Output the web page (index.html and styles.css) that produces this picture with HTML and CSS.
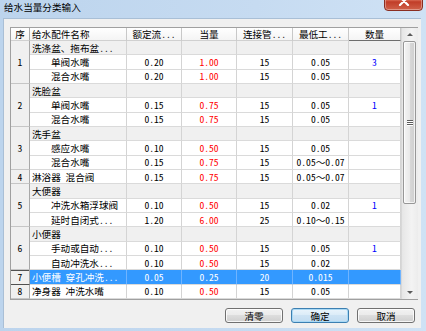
FILE: index.html
```html
<!DOCTYPE html>
<html lang="zh-CN">
<head>
<meta charset="utf-8">
<title>给水当量分类输入</title>
<link rel="stylesheet" href="styles.css">
</head>
<body>
<div class="window">
  <div class="titlebar">
    <span class="title">给水当量分类输入</span>
    <div class="close"><svg width="12" height="10" viewBox="0 0 12 10"><path d="M2 1 L10 9 M10 1 L2 9" stroke="#fff" stroke-width="2.2" stroke-linecap="round"/></svg></div>
  </div>
  <div class="client">
    <div class="grid">
      <div class="table-wrap">
        <table class="data">
          <thead>
            <tr>
              <th class="w-no">序</th>
              <th class="w-name left">给水配件名称</th>
              <th class="w-a">额定流...</th>
              <th class="w-a">当量</th>
              <th class="w-b">连接管...</th>
              <th class="w-b">最低工...</th>
              <th class="w-q sorted">数量</th>
            </tr>
          </thead>
          <tbody>
            <tr class="group"><td class="no" rowspan="3">1</td><td class="name">洗涤盆、拖布盆...</td><td></td><td></td><td></td><td></td><td></td></tr>
            <tr><td class="name sub">单阀水嘴</td><td>0.20</td><td class="red">1.00</td><td>15</td><td>0.05</td><td class="qty">3</td></tr>
            <tr><td class="name sub">混合水嘴</td><td>0.20</td><td class="red">1.00</td><td>15</td><td>0.05</td><td></td></tr>

            <tr class="group"><td class="no" rowspan="3">2</td><td class="name">洗脸盆</td><td></td><td></td><td></td><td></td><td></td></tr>
            <tr><td class="name sub">单阀水嘴</td><td>0.15</td><td class="red">0.75</td><td>15</td><td>0.05</td><td class="qty">1</td></tr>
            <tr><td class="name sub">混合水嘴</td><td>0.15</td><td class="red">0.75</td><td>15</td><td>0.05</td><td></td></tr>

            <tr class="group"><td class="no" rowspan="3">3</td><td class="name">洗手盆</td><td></td><td></td><td></td><td></td><td></td></tr>
            <tr><td class="name sub">感应水嘴</td><td>0.10</td><td class="red">0.50</td><td>15</td><td>0.05</td><td></td></tr>
            <tr><td class="name sub">混合水嘴</td><td>0.15</td><td class="red">0.75</td><td>15</td><td>0.05～0.07</td><td></td></tr>

            <tr><td class="no">4</td><td class="name">淋浴器 混合阀</td><td>0.15</td><td class="red">0.75</td><td>15</td><td>0.05～0.07</td><td></td></tr>

            <tr class="group"><td class="no" rowspan="3">5</td><td class="name">大便器</td><td></td><td></td><td></td><td></td><td></td></tr>
            <tr><td class="name sub">冲洗水箱浮球阀</td><td>0.10</td><td class="red">0.50</td><td>15</td><td>0.02</td><td class="qty">1</td></tr>
            <tr><td class="name sub">延时自闭式...</td><td>1.20</td><td class="red">6.00</td><td>25</td><td>0.10～0.15</td><td></td></tr>

            <tr class="group"><td class="no" rowspan="3">6</td><td class="name">小便器</td><td></td><td></td><td></td><td></td><td></td></tr>
            <tr><td class="name sub">手动或自动...</td><td>0.10</td><td class="red">0.50</td><td>15</td><td>0.05</td><td class="qty">1</td></tr>
            <tr><td class="name sub">自动冲洗水...</td><td>0.10</td><td class="red">0.50</td><td>15</td><td>0.02</td><td></td></tr>

            <tr class="selected"><td class="no current">7</td><td class="name">小便槽 穿孔冲洗...</td><td>0.05</td><td class="red">0.25</td><td>20</td><td>0.015</td><td></td></tr>
            <tr><td class="no">8</td><td class="name">净身器 冲洗水嘴</td><td>0.10</td><td class="red">0.50</td><td>15</td><td>0.05</td><td></td></tr>
          </tbody>
        </table>
      </div>
      <div class="scrollbar">
        <div class="sb-btn"><span class="arrow-up"></span></div>
        <div class="sb-track">
          <div class="sb-thumb"><span class="grip"></span><span class="grip"></span><span class="grip"></span></div>
        </div>
        <div class="sb-btn"><span class="arrow-down"></span></div>
      </div>
    </div>
    <div class="buttons">
      <button class="btn">清零</button>
      <button class="btn default">确定</button>
      <button class="btn">取消</button>
    </div>
  </div>
</div>
</body>
</html>
```

FILE: styles.css
```css
* { box-sizing: border-box; }
html, body { margin: 0; padding: 0; }
body {
  width: 426px;
  height: 331px;
  overflow: hidden;
  font-family: "Noto Sans Mono CJK SC", "Noto Sans CJK SC", sans-serif;
  font-size: 9.6px;
  color: #000;
}
.window {
  width: 426px;
  height: 331px;
  display: flex;
  flex-direction: column;
  background: linear-gradient(to right, #bcd4ed, #c6dbf1 60%, #cfe2f5);
}
.titlebar {
  height: 18px;
  flex: none;
  display: flex;
  align-items: flex-start;
  justify-content: space-between;
  padding: 0 3px 0 4px;
}
.title { line-height: 15px; }
.close {
  width: 39px;
  height: 20px;
  margin-top: -9px;
  border: 1px solid #8a2e22;
  border-radius: 0 0 4px 4px;
  background: linear-gradient(#e7a497, #d66650 45%, #c13d28 55%, #d0614a);
  display: flex;
  align-items: center;
  justify-content: center;
  box-shadow: inset 0 0 0 1px rgba(255,255,255,0.35);
}
.client {
  flex: 1;
  margin: 0 5px 3px 3px;
  background: #f0f0f0;
  padding: 9px 3px 0 7px;
  display: flex;
  flex-direction: column;
  border-top: 1px solid #a9bfd6;
  border-left: 1px solid #a9bfd6;
}
.grid {
  height: 273px;
  flex: none;
  border: 1px solid #a0a0a0;
  background: #fff;
  display: flex;
  margin-top: -1px;
  margin-left: -1px;
}
.table-wrap { width: 390px; flex: none; overflow: hidden; }
.data {
  width: 390px;
  table-layout: fixed;
  border-collapse: separate;
  border-spacing: 0;
}
.data th, .data td {
  padding: 0;
  border-right: 1px solid #d4d4d4;
  border-bottom: 1px solid #dadada;
  text-align: center;
  white-space: nowrap;
  overflow: hidden;
  line-height: 12px;
  vertical-align: middle;
}
.data th {
  height: 13px;
  font-weight: normal;
  background: linear-gradient(#ffffff, #f4f4f4);
  border-right-color: #c8c8c8;
  border-bottom-color: #d0d0d0;
}
.data th.left { text-align: left; padding-left: 2px; }
.data th.sorted { border-bottom-color: #6e6e6e; }
.w-no { width: 19px; }
.w-name { width: 97px; }
.w-a { width: 55px; }
.w-b { width: 56px; }
.w-q { width: 52px; }
.data td { height: 14.34px; }
.data td.name { text-align: left; padding-left: 2px; }
.data td.name.sub { padding-left: 21px; }
.data td.no {
  background: #f0f0f0;
  border-right-color: #a8a8a8;
  border-bottom-color: #c6c6c6;
}
.data th.w-no { border-right-color: #a8a8a8; }
.data tr.group td { background: #f0f0f0; }
.data td.red { color: #ff0000; }
.data td.qty { color: #0000ff; }
.data tr.selected td {
  background: #3399ff;
  color: #fff;
  border-right-color: #6fb4ff;
}
.data tr.selected td.red { color: #fff; }
.data tr.selected td.no {
  background: #f0f0f0;
  color: #000;
  box-shadow: inset 0 1px 0 #505050;
  border-bottom-color: #505050;
  border-right-color: #a8a8a8;
}
.scrollbar {
  width: 17px;
  flex: none;
  display: flex;
  flex-direction: column;
  border-left: 1px solid #d8d8d8;
  background: linear-gradient(to right, #e6e6e6, #f3f3f3 60%, #ececec);
}
.sb-btn {
  height: 13px;
  flex: none;
  display: flex;
  align-items: center;
  justify-content: center;
}
.arrow-up, .arrow-down {
  width: 0;
  height: 0;
  border-left: 3px solid transparent;
  border-right: 3px solid transparent;
}
.arrow-up { border-bottom: 3px solid #5a5a5a; }
.arrow-down { border-top: 3px solid #5a5a5a; }
.sb-track { flex: 1; padding: 0 2px 0 1px; }
.sb-thumb {
  height: 163px;
  border: 1px solid #979797;
  border-radius: 2px;
  background: linear-gradient(to right, #f4f4f4, #e9e9e9 50%, #d8d8d8 51%, #cfcfcf);
  box-shadow: inset 0 0 0 1px rgba(255,255,255,0.7);
  display: flex;
  flex-direction: column;
  align-items: center;
  justify-content: center;
  gap: 1px;
}
.grip {
  width: 6px;
  height: 1px;
  background: #5c5c5c;
  box-shadow: 0 1px 0 #fff;
}
.buttons {
  display: flex;
  justify-content: flex-end;
  gap: 8px;
  margin-top: 8px;
  padding-right: 3px;
}
.btn {
  width: 58px;
  height: 15px;
  padding: 0;
  font: inherit;
  line-height: 12px;
  color: #000;
  border: 1px solid #707070;
  border-radius: 3px;
  background: linear-gradient(#f2f2f2, #ebebeb 45%, #dddddd 50%, #cfcfcf);
  box-shadow: inset 0 0 0 1px rgba(255,255,255,0.8);
}
.btn.default {
  border-color: #3c7fb1;
  background: linear-gradient(#eaf4fb, #dcecf8 45%, #cde3f4 50%, #c2dcf1);
  box-shadow: inset 0 0 0 1px #a9d9f5;
}
```
